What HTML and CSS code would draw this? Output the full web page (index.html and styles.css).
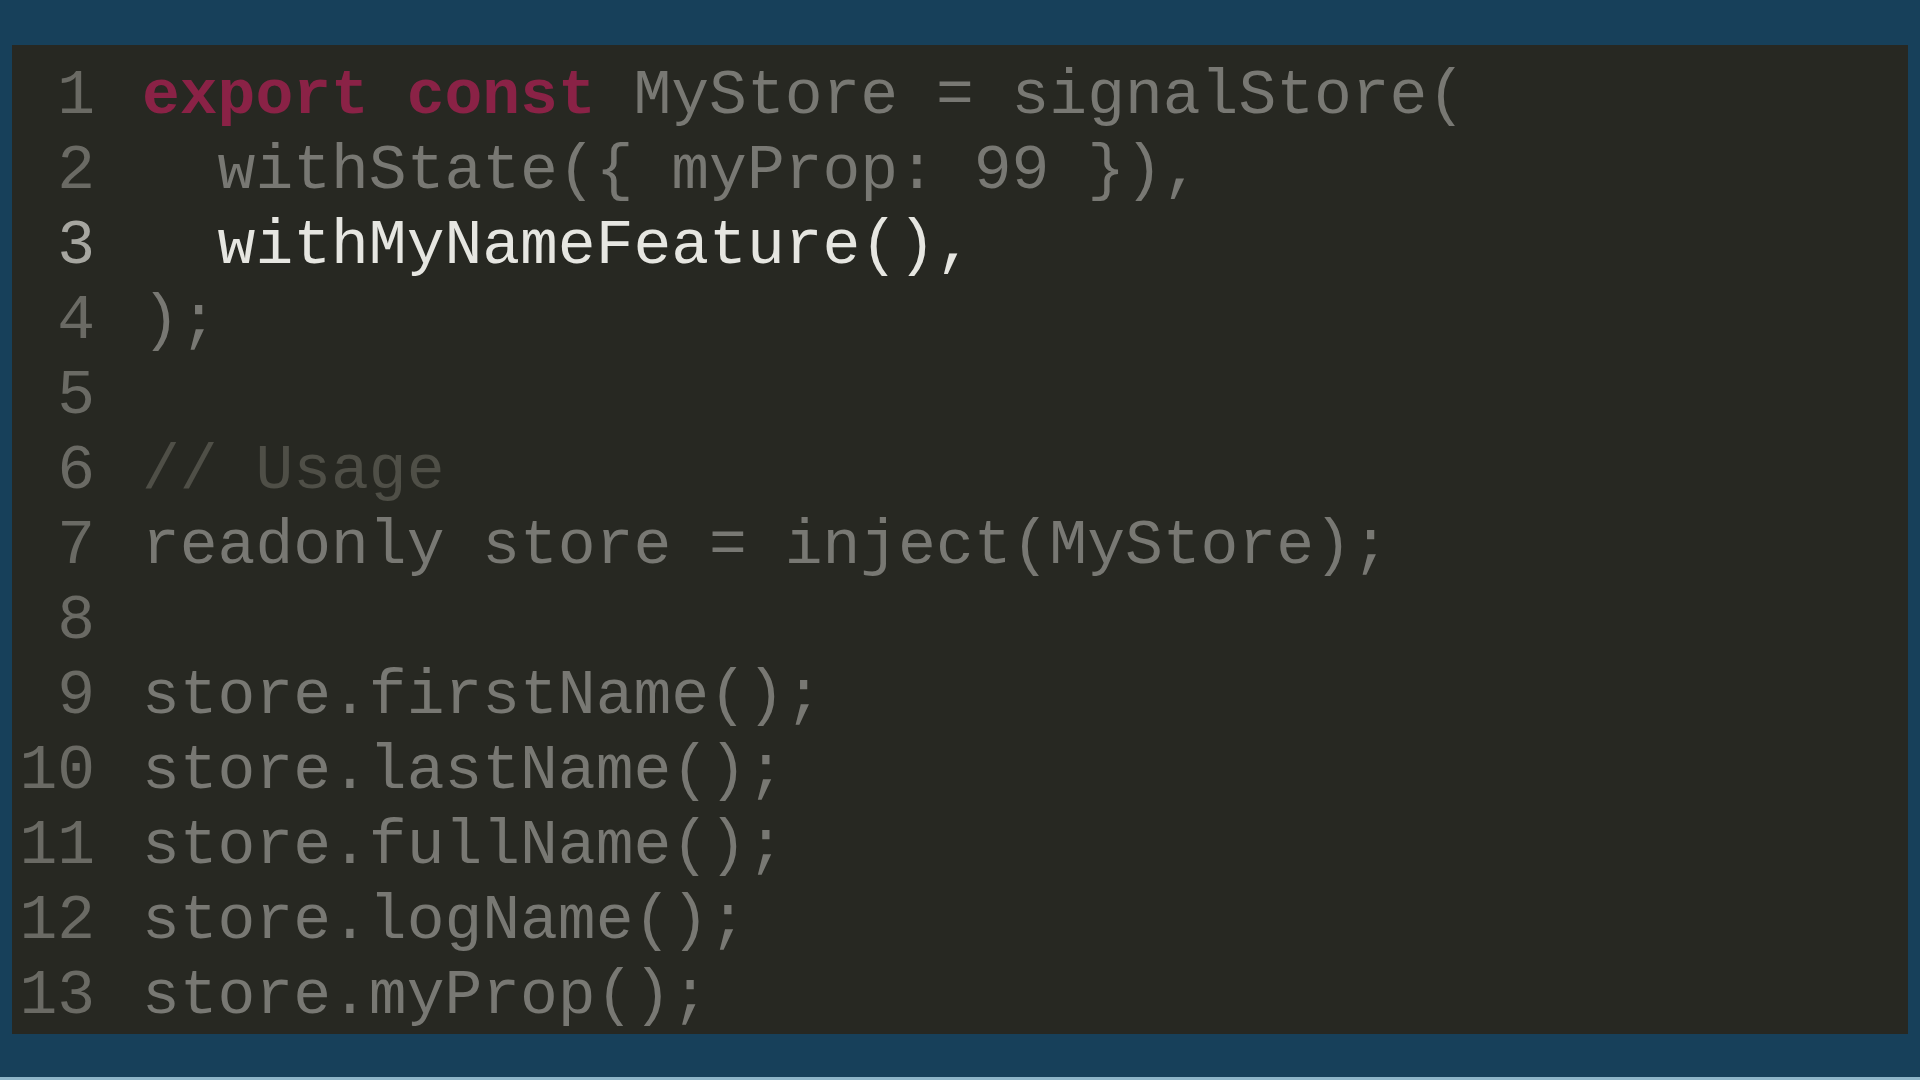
FILE: index.html
```html
<!DOCTYPE html>
<html lang="en">
<head>
    <meta charset="UTF-8">
    <title>withMyNameFeature</title>
    <link rel="stylesheet" href="styles.css">
</head>
<body>
    <div class="editor">
        <div class="line"><span class="num">1</span><code><span class="kw">export</span> <span class="kw">const</span> MyStore = signalStore(</code></div>
        <div class="line"><span class="num">2</span><code>  withState({ myProp: 99 }),</code></div>
        <div class="line active"><span class="num">3</span><code>  withMyNameFeature(),</code></div>
        <div class="line"><span class="num">4</span><code>);</code></div>
        <div class="line"><span class="num">5</span><code></code></div>
        <div class="line"><span class="num">6</span><code><span class="comment">// Usage</span></code></div>
        <div class="line"><span class="num">7</span><code>readonly store = inject(MyStore);</code></div>
        <div class="line"><span class="num">8</span><code></code></div>
        <div class="line"><span class="num">9</span><code>store.firstName();</code></div>
        <div class="line"><span class="num">10</span><code>store.lastName();</code></div>
        <div class="line"><span class="num">11</span><code>store.fullName();</code></div>
        <div class="line"><span class="num">12</span><code>store.logName();</code></div>
        <div class="line"><span class="num">13</span><code>store.myProp();</code></div>
    </div>
</body>
</html>
```

FILE: styles.css
```css
html {
    background-color: #17405a;
}
body {
    margin: 0;
    padding: 45px 12px 0 12px;
    height: 1080px;
    box-sizing: border-box;
    border-bottom: 3px solid #8fb6c9;
    background-color: #17405a;
}
.editor {
    background-color: #272822;
    height: 989px;
    box-sizing: border-box;
    padding-top: 14px;
    font-family: "Courier New", "Nimbus Mono PS", "Nimbus Mono L", "FreeMono", "Courier 10 Pitch", Courier, "Liberation Mono", monospace;
    font-size: 63px;
    line-height: 75px;
    color: #787873;
}
.line {
    display: flex;
    height: 75px;
}
.num {
    width: 83px;
    flex-shrink: 0;
    text-align: right;
    margin-right: 47px;
    color: #6a6a64;
}
code {
    font-family: inherit;
    white-space: pre;
}
.kw {
    color: #8a2246;
    font-weight: bold;
}
.comment {
    color: #4f4f47;
}
.active .num {
    color: #a6a6a0;
}
.active code {
    color: #e6e6e1;
}
```
